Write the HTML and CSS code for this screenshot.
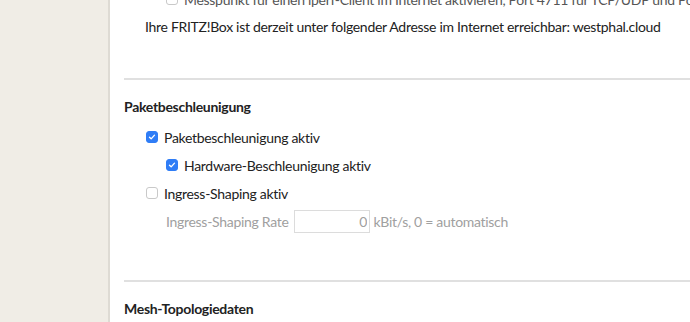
FILE: index.html
```html
<!DOCTYPE html>
<html lang="de">
<head>
    <meta charset="UTF-8">
    <meta name="viewport" content="width=device-width, initial-scale=1.0">
    <title>Internet - Freigaben</title>
    <link rel="stylesheet" href="styles.css">
</head>
<body>
    <aside class="sidebar"></aside>
    <main class="page">
        <div class="section">
            <label class="opt opt-sub muted-dark">
                <input type="checkbox">
                <span>Messpunkt für einen iperf-Client im Internet aktivieren, Port 4711 für TCP/UDP und Port 4712</span>
            </label>
            <p class="note">Ihre FRITZ!Box ist derzeit unter folgender Adresse im Internet erreichbar: westphal.cloud</p>
        </div>

        <hr class="divider">

        <div class="section">
            <h3 class="section-title">Paketbeschleunigung</h3>
            <label class="opt">
                <input type="checkbox" checked>
                <span>Paketbeschleunigung aktiv</span>
            </label>
            <label class="opt opt-sub">
                <input type="checkbox" checked>
                <span>Hardware-Beschleunigung aktiv</span>
            </label>
            <label class="opt">
                <input type="checkbox">
                <span>Ingress-Shaping aktiv</span>
            </label>
            <div class="opt opt-field disabled">
                <span>Ingress-Shaping Rate</span>
                <input type="text" class="rate" value="0" disabled>
                <span>kBit/s, 0 = automatisch</span>
            </div>
        </div>

        <hr class="divider divider-low">

        <div class="section">
            <h3 class="section-title">Mesh-Topologiedaten</h3>
        </div>
    </main>
</body>
</html>
```

FILE: styles.css
```css
body {
    font-family: Lato, "Noto Sans", sans-serif;
    font-size: 14px;
    letter-spacing: -0.3px;
    color: #222;
    margin: 0;
    padding: 0;
    display: flex;
    height: 322px;
    overflow: hidden;
}

.sidebar {
    width: 108px;
    flex-shrink: 0;
    background-color: #f0ede6;
    border-right: 2px solid #dedbd4;
}

.page {
    flex: 1;
    min-width: 0;
    background: #fff;
    padding-left: 14px;
    margin-top: -15px;
    overflow: hidden;
}

.opt {
    display: flex;
    align-items: center;
    height: 28px;
    padding-left: 22px;
    white-space: nowrap;
}

.opt-sub {
    padding-left: 42px;
}

.opt input[type="checkbox"] {
    appearance: none;
    width: 12px;
    height: 12px;
    margin: 0 6px 0 0;
    border: 1px solid #c9c9c9;
    border-radius: 3px;
    background: #fff;
    flex-shrink: 0;
}

.opt input[type="checkbox"]:checked {
    border-color: #2f7df6;
    background: #2f7df6 url("data:image/svg+xml;utf8,<svg xmlns='http://www.w3.org/2000/svg' viewBox='0 0 12 12'><path d='M3 6.2l2 2 4-4.4' fill='none' stroke='white' stroke-width='1.6' stroke-linecap='round' stroke-linejoin='round'/></svg>") center / 100% no-repeat;
}

.muted-dark {
    color: #555;
}

.note {
    margin: 0;
    line-height: 28px;
    padding-left: 21px;
    white-space: nowrap;
}

.divider {
    border: none;
    border-top: 2px solid #e0e0e0;
    margin: 37px 0 0;
}

.divider-low {
    margin-top: 45px;
}

.section-title {
    font-size: 14px;
    font-weight: bold;
    line-height: 24px;
    margin: 15px 0 4px;
}

.opt-field {
    padding-left: 42px;
    gap: 6px;
}

.opt-field .rate {
    margin-right: -3px;
}

.disabled {
    color: #a0a0a0;
}

.rate {
    width: 70px;
    height: 19px;
    padding: 1px 2px;
    border: 1px solid #dcdcdc;
    text-align: right;
    font: inherit;
    color: #a0a0a0;
    background: #fff;
}
```
